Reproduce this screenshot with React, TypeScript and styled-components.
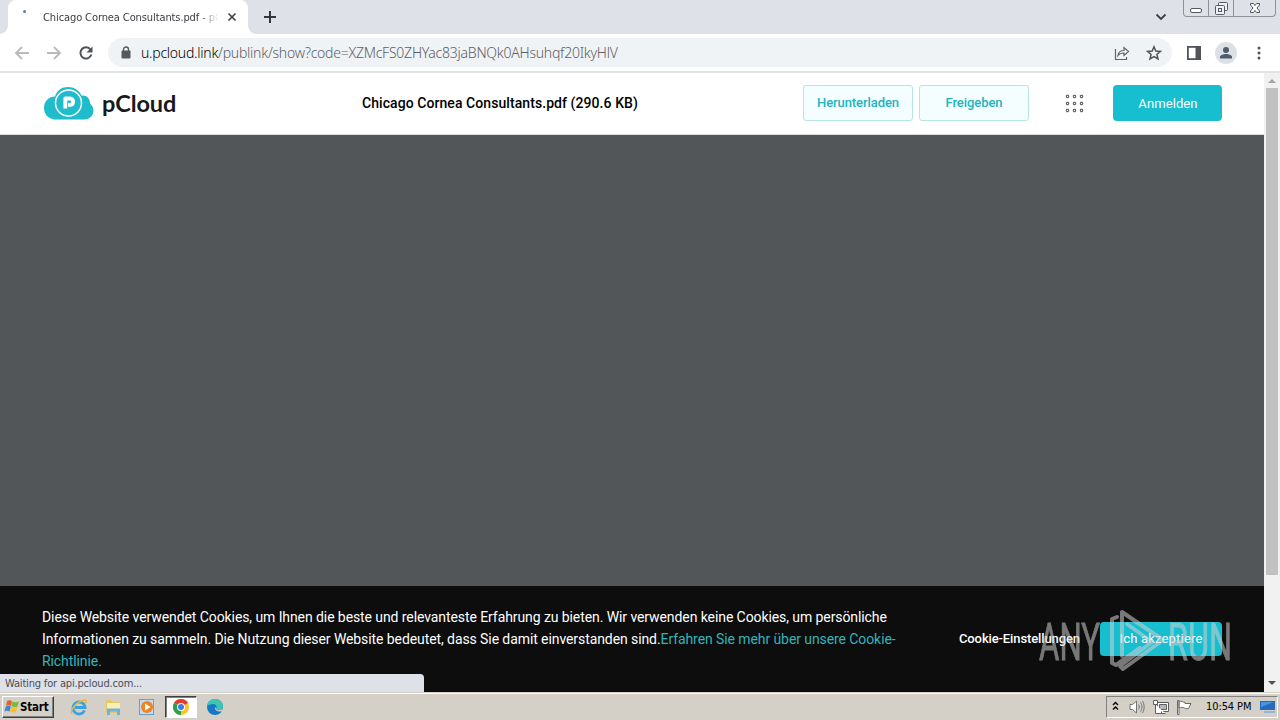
import React from "react";
import styled, { createGlobalStyle } from "styled-components";

const Global = createGlobalStyle`
  * { box-sizing: border-box; }
  html, body { margin: 0; padding: 0; overflow: hidden; }
  svg { display: block; flex: none; }
  button { margin: 0; padding: 0; border: 0; background: none; font: inherit; color: inherit; }
`;

const uiFont = `"DejaVu Sans Condensed", "DejaVu Sans", sans-serif`;

const Screen = styled.div`
  position: relative;
  width: 1280px;
  height: 720px;
  display: flex;
  flex-direction: column;
  overflow: hidden;
  background: #fff;
  font-family: Roboto, sans-serif;
  white-space: nowrap;
`;

/* Browser chrome */
const TabStrip = styled.div`
  height: 34px;
  flex: none;
  display: flex;
  background: #dee1e8;
  padding-left: 8px;
`;
const Tab = styled.div`
  position: relative;
  width: 240px;
  height: 34px;
  display: flex;
  align-items: center;
  padding: 0 10px 0 10px;
  background: #fff;
  border-radius: 8px 8px 0 0;
  &::before, &::after {
    content: "";
    position: absolute;
    bottom: 0;
    width: 8px;
    height: 8px;
  }
  &::before { left: -8px; background: radial-gradient(circle at 0 0, #dee1e8 7.5px, #fff 8px); }
  &::after { right: -8px; background: radial-gradient(circle at 100% 0, #dee1e8 7.5px, #fff 8px); }
`;
const Spinner = styled.span`
  width: 3px;
  height: 3px;
  margin: 0 17px 11px 5px;
  border-radius: 2px;
  background: #4a7fd0;
`;
const TabTitle = styled.span`
  width: 176px;
  padding-top: 2px;
  overflow: hidden;
  font: 11px/16px ${uiFont};
  letter-spacing: -0.1px;
  color: #3a3d41;
  mask-image: linear-gradient(to right, #000 155px, transparent 176px);
`;
const TabClose = styled.button`
  margin-left: 8px;
`;
const NewTab = styled.button`
  margin-left: 15px;
`;
const TabSearch = styled.button`
  margin-left: auto;
  margin-right: 16px;
`;
const WindowControls = styled.div`
  display: flex;
  width: 93px;
  height: 17px;
  margin-right: 4px;
  border: 1px solid #8e929b;
  border-top: 0;
  border-radius: 0 0 4px 4px;
`;
const WindowButton = styled.button<{ $w: number }>`
  width: ${(p) => p.$w}px;
  height: 16px;
  display: flex;
  justify-content: center;
  & + & { border-left: 1px solid #8e929b; }
`;
const Toolbar = styled.div`
  height: 39px;
  flex: none;
  display: flex;
  align-items: center;
  padding: 0 19px 0 14px;
  border-bottom: 2px solid #e1e2e4;
`;
const NavButton = styled.button`
  width: 16px;
  height: 16px;
  margin-right: 16px;
`;
const AddressBar = styled.div`
  width: 1064px;
  height: 29px;
  flex: none;
  display: flex;
  align-items: center;
  margin-left: -2px;
  padding: 0 10px 0 13px;
  border-radius: 15px;
  background: #f0f3f5;
`;
const Url = styled.span`
  margin: 1px auto 0 10px;
  font: 300 14px/20px "Noto Sans", sans-serif;
  letter-spacing: -0.245px;
  color: #5c6064;
  b { font-weight: 300; color: #000; }
`;
const BarIcon = styled.button`
  margin-left: 16px;
`;
const PanelIcon = styled.button`
  margin-left: 15px;
`;
const Avatar = styled.span`
  width: 22px;
  height: 22px;
  margin: 0 20px 0 14px;
  border-radius: 50%;
  background: #dde1e6;
`;

/* Page */
const Viewport = styled.div`
  position: relative;
  height: 619px;
  flex: none;
  display: flex;
`;
const Page = styled.div`
  width: 1264px;
  display: flex;
  flex-direction: column;
`;
const Header = styled.header`
  height: 62px;
  flex: none;
  display: flex;
  align-items: center;
  padding: 0 42px 1px 43px;
  border-bottom: 1px solid #d9dadb;
`;
const Brand = styled.span`
  width: 260px;
  margin: 0 0 0 8px;
  font: 700 23.5px/30px Lato, sans-serif;
  letter-spacing: -0.1px;
  color: #17191b;
`;
const FileName = styled.span`
  width: 441px;
  font-weight: 500;
  font-size: 14px;
  letter-spacing: 0.07px;
  color: #000;
`;
const OutlineButton = styled.button`
  width: 110px;
  height: 36px;
  margin-right: 6px;
  padding-bottom: 1px;
  border: 1px solid #b9e4e6;
  border-radius: 3px;
  background: #f4fdff;
  color: #20b5bd;
  font-size: 13px;
  font-weight: 500;
  letter-spacing: -0.08px;
`;
const AppsButton = styled.button`
  margin: 0 29px 0 30px;
`;
const PrimaryButton = styled.button<{ $w: number; $h: number }>`
  width: ${(p) => p.$w}px;
  height: ${(p) => p.$h}px;
  padding-left: 1px;
  border-radius: 4px;
  background: #17bed0;
  color: #fff;
  font-size: 13px;
  letter-spacing: 0.1px;
`;
const Preview = styled.main`
  flex: 1;
  background: #525659;
`;
const CookieBar = styled.footer`
  height: 106px;
  flex: none;
  display: flex;
  padding: 20px 42px 0 42px;
  background: #0d0d0d;
  color: #fff;
`;
const CookieText = styled.p`
  width: 917px;
  margin: 0;
  font-size: 14px;
  line-height: 22px;
  letter-spacing: -0.085px;
  a { color: #33b4bb; }
`;
const CookieSettings = styled.button`
  width: 121px;
  height: 34px;
  margin: 15px 20px 0 0;
  text-align: left;
  font-size: 13px;
  font-weight: 500;
  letter-spacing: -0.12px;
`;
const AcceptButton = styled(PrimaryButton)`
  margin-top: 16px;
  padding: 0 0 2px;
  letter-spacing: 0.2px;
`;
const ScrollBar = styled.div`
  width: 16px;
  display: flex;
  flex-direction: column;
  align-items: center;
  background: #f1f1f1;
`;
const ScrollArrow = styled.span<{ $down?: boolean }>`
  width: 0;
  height: 0;
  margin: ${(p) => (p.$down ? "auto 0 7px" : "6px 0 5px")};
  border: 4px solid transparent;
  ${(p) =>
    p.$down
      ? "border-bottom-width: 0; border-top-color: #505050;"
      : "border-top-width: 0; border-bottom-color: #a3a3a3;"}
`;
const ScrollThumb = styled.span`
  width: 12px;
  height: 487px;
  background: #c1c1c1;
`;
const StatusBubble = styled.div`
  position: absolute;
  left: 0;
  bottom: 0;
  width: 424px;
  height: 18px;
  padding: 1px 0 0 5px;
  border-radius: 0 4px 0 0;
  background: #dee1e8;
  color: #4a4d52;
  font: 11px/18px ${uiFont};
  letter-spacing: -0.17px;
`;
const Watermark = styled.svg`
  position: absolute;
  left: 1034px;
  top: 532px;
`;

/* Taskbar */
const Taskbar = styled.div`
  height: 28px;
  flex: none;
  display: flex;
  align-items: center;
  padding: 1px 2px 1px 2px;
  border-top: 1px solid #d4d0c8;
  box-shadow: inset 0 1px #fff;
  background: #d4d0c8;
  color: #000;
`;
const StartButton = styled.button`
  display: flex;
  align-items: center;
  width: 52px;
  height: 22px;
  margin-right: 9px;
  padding-left: 1px;
  border: 1px solid;
  border-color: #fff #404040 #404040 #fff;
  box-shadow: inset -1px -1px #808080;
  font: bold 11.5px/18px ${uiFont};
  letter-spacing: -0.2px;
`;
const TaskItem = styled.button<{ $active?: boolean }>`
  display: flex;
  align-items: center;
  justify-content: center;
  width: 32px;
  height: 22px;
  margin-right: 2px;
  border: 1px solid;
  border-color: ${(p) => (p.$active ? "#404040 #fff #fff #404040" : "transparent")};
  box-shadow: ${(p) => (p.$active ? "inset 1px 1px #808080" : "none")};
  background: ${(p) => (p.$active ? "#fff" : "transparent")};
`;
const Tray = styled.div`
  display: flex;
  align-items: center;
  width: 172px;
  height: 22px;
  margin-left: auto;
  padding-left: 5px;
  border: 1px solid;
  border-color: #808080 #fff #fff #808080;
`;
const TrayIcon = styled.span<{ $gap: number }>`
  margin-right: ${(p) => p.$gap}px;
`;
const Clock = styled.span`
  width: 54px;
  font: 11px/16px ${uiFont};
  letter-spacing: -0.1px;
`;

const Arrow = ({ flip }: { flip?: boolean }) => (
  <svg width="16" height="16" viewBox="0 0 16 16" fill="none" stroke="#b8babd" strokeWidth="1.8">
    <path d={flip ? "M1 8h13M8 2l6 6-6 6" : "M15 8H2M8 2L2 8l6 6"} />
  </svg>
);

const CloudLogo = () => (
  <svg width="51" height="34" viewBox="0 0 51 34">
    <path
      d="M11 33.5A11 11 0 0 1 1 22C1 15 6 10.500 12 10.500C14 4 19 1 25 1S36 4 38.500 9.500C44 9 47 12.500 47 17.500C53 22 51 33 42 33.500Z"
      fill="#1fbccb"
    />
    <circle cx="25.500" cy="17" r="13" fill="#1fbccb" stroke="#fff" strokeWidth="1.5" />
    <path
      d="M22.300 22.500V12.500H27.500A3.200 3.200 0 0 1 27.500 18.800H25"
      fill="none"
      stroke="#fff"
      strokeWidth="3.800"
      strokeLinejoin="round"
    />
  </svg>
);

const AppsGrid = () => (
  <svg width="19" height="19" viewBox="0 0 19 19" fill="none" stroke="#6b6b6b" strokeWidth="1.2">
    {[2.5, 9.5, 16.5].map((y) =>
      [2.5, 9.5, 16.5].map((x) => (
        <rect key={`${x}-${y}`} x={x - 1.1} y={y - 1.1} width="2.200" height="2.200" rx="0.500" />
      ))
    )}
  </svg>
);

export default function App() {
  return (
    <Screen>
      <Global />
      <TabStrip>
        <Tab>
          <Spinner />
          <TabTitle>Chicago Cornea Consultants.pdf - pCloud</TabTitle>
          <TabClose aria-label="Close tab">
            <svg width="10" height="10" viewBox="0 0 10 10" stroke="#3c4043" strokeWidth="1.6">
              <path d="M1.500 1.500l7 7M8.500 1.500l-7 7" />
            </svg>
          </TabClose>
        </Tab>
        <NewTab aria-label="New tab">
          <svg width="14" height="14" viewBox="0 0 14 14" stroke="#33363a" strokeWidth="2">
            <path d="M7 1v12M1 7h12" />
          </svg>
        </NewTab>
        <TabSearch aria-label="Search tabs">
          <svg width="12" height="12" viewBox="0 0 12 12" fill="none" stroke="#3c4043" strokeWidth="1.8">
            <path d="M1.500 3.500L6 8l4.500-4.500" />
          </svg>
        </TabSearch>
        <WindowControls>
          <WindowButton $w={24} aria-label="Minimize">
            <svg width="14" height="16" viewBox="0 0 14 16">
              <rect x="1.500" y="8.500" width="11" height="4" rx="1.500" fill="#fff" stroke="#555961" />
            </svg>
          </WindowButton>
          <WindowButton $w={25} aria-label="Restore">
            <svg width="14" height="16" viewBox="0 0 14 16" fill="#eef0f4" stroke="#555961">
              <rect x="4.500" y="2.500" width="9" height="8" rx="1" />
              <rect x="1.500" y="5.500" width="9" height="9" rx="1" />
              <rect x="4.500" y="8.500" width="3" height="3" />
            </svg>
          </WindowButton>
          <WindowButton $w={42} aria-label="Close">
            <svg width="14" height="16" viewBox="0 0 14 16">
              <path
                d="M2.500 3.500h3L7 5.500l1.500-2h3v1.500L9 8l2.500 3v1.500h-3L7 10.500l-1.500 2h-3V11L5 8 2.500 5z"
                fill="#fff"
                stroke="#555961"
              />
            </svg>
          </WindowButton>
        </WindowControls>
      </TabStrip>
      <Toolbar>
        <NavButton aria-label="Back"><Arrow /></NavButton>
        <NavButton aria-label="Forward"><Arrow flip /></NavButton>
        <NavButton aria-label="Reload">
          <svg width="16" height="16" viewBox="0 0 16 16">
            <path d="M12.500 4.500A5.600 5.600 0 1 0 13.400 9.500" fill="none" stroke="#505458" strokeWidth="2" />
            <path d="M14.500 1.500v6H8.500z" fill="#505458" />
          </svg>
        </NavButton>
        <AddressBar>
          <svg width="10" height="13" viewBox="0 0 10 13">
            <rect x="0.500" y="4.500" width="9" height="8" rx="1" fill="#55595d" />
            <path d="M2.500 5V3.500a2.500 2.500 0 0 1 5 0V5" fill="none" stroke="#55595d" strokeWidth="1.400" />
          </svg>
          <Url><b>u.pcloud.link</b>/publink/show?code=XZMcFS0ZHYac83jaBNQk0AHsuhqf20IkyHlV</Url>
          <BarIcon aria-label="Share">
            <svg width="16" height="16" viewBox="0 0 16 16" fill="none" stroke="#5f6368" strokeWidth="1.200">
              <path d="M1.500 4v10.500H12.500V12" />
              <path d="M4 10.500c.5-3.800 3-5 6-5V2.500L14.500 6.500l-4.500 4V8C7.500 8 5.500 8.500 4 10.500z" />
            </svg>
          </BarIcon>
          <BarIcon aria-label="Bookmark">
            <svg width="16" height="16" viewBox="0 0 16 16" fill="none" stroke="#505458" strokeWidth="1.500">
              <path d="M8 1.800l1.800 4.200 4.600.4-3.500 3 1.100 4.500L8 11.500l-4 2.400 1.100-4.500-3.500-3L6.200 6z" />
            </svg>
          </BarIcon>
        </AddressBar>
        <PanelIcon aria-label="Side panel">
          <svg width="14" height="14" viewBox="0 0 14 14">
            <rect x="0.900" y="0.900" width="12.200" height="12.200" fill="#fff" stroke="#505458" strokeWidth="1.800" />
            <path d="M8.500 0H14v14H8.500z" fill="#505458" />
          </svg>
        </PanelIcon>
        <Avatar>
          <svg width="22" height="22" viewBox="0 0 22 22" fill="#505b70">
            <circle cx="11" cy="8" r="3" />
            <path d="M5 16.500v-1.500c0-2 3.500-3 6-3s6 1 6 3v1.500z" />
          </svg>
        </Avatar>
        <svg width="4" height="14" viewBox="0 0 4 14" fill="#505458">
          <circle cx="2" cy="2" r="1.500" />
          <circle cx="2" cy="7" r="1.500" />
          <circle cx="2" cy="12" r="1.500" />
        </svg>
      </Toolbar>

      <Viewport>
        <Page>
          <Header>
            <CloudLogo />
            <Brand>pCloud</Brand>
            <FileName>Chicago Cornea Consultants.pdf (290.6 KB)</FileName>
            <OutlineButton>Herunterladen</OutlineButton>
            <OutlineButton>Freigeben</OutlineButton>
            <AppsButton aria-label="Apps"><AppsGrid /></AppsButton>
            <PrimaryButton $w={109} $h={36}>Anmelden</PrimaryButton>
          </Header>
          <Preview />
          <CookieBar>
            <CookieText>
              Diese Website verwendet Cookies, um Ihnen die beste und relevanteste Erfahrung zu bieten. Wir verwenden keine Cookies, um persönliche<br />
              Informationen zu sammeln. Die Nutzung dieser Website bedeutet, dass Sie damit einverstanden sind.<a>Erfahren Sie mehr über unsere Cookie-<br />Richtlinie.</a>
            </CookieText>
            <CookieSettings>Cookie-Einstellungen</CookieSettings>
            <AcceptButton $w={122} $h={34}>Ich akzeptiere</AcceptButton>
          </CookieBar>
        </Page>
        <ScrollBar>
          <ScrollArrow />
          <ScrollThumb />
          <ScrollArrow $down />
        </ScrollBar>
        <StatusBubble>Waiting for api.pcloud.com...</StatusBubble>
        <Watermark width="202" height="72" viewBox="0 0 202 72" opacity="0.55">
          <g fill="#d0d0d0" stroke="#d0d0d0" strokeWidth="0.8" fontFamily="Roboto" fontSize="52">
            <text x="5" y="55" textLength="61" lengthAdjust="spacingAndGlyphs">ANY</text>
            <text x="134" y="55" textLength="64" lengthAdjust="spacingAndGlyphs">RUN</text>
          </g>
          <g fill="none" stroke="#d0d0d0" strokeWidth="4" strokeLinejoin="round" strokeLinecap="round">
            <path d="M83 12L78 14V58L82 60 106 43" />
            <path d="M88 51V7L129 35 89 64 86 61 118 37 93 19" />
          </g>
        </Watermark>
      </Viewport>

      <Taskbar>
        <StartButton>
          <svg width="16" height="15" viewBox="0 0 16 15">
            <path d="M3 2c2-1 4-1 5 .5L7 7C5.500 6 3.500 6 2 7z" fill="#e8602c" />
            <path d="M8.500 2.500c2 1 4 1 6.500 0l-1.500 5c-2 1-4 .5-6-.3z" fill="#7cb83e" />
            <path d="M1.800 7.500c2-1 3.500-1 5 0l-1.300 5c-1.500-1-3-1-5 0z" fill="#3f86cf" />
            <path d="M7.300 7.800c2 1 4 1 6 .2L12 13c-2 1-4 .6-6-.3z" fill="#f5c030" />
          </svg>
          Start
        </StartButton>
        <TaskItem aria-label="Internet Explorer">
          <svg width="18" height="18" viewBox="0 0 18 18" fill="none">
            <path d="M14.500 12.500A6 6 0 1 1 15 9.500H5" stroke="#3ba3df" strokeWidth="2.800" />
            <path d="M2 15.500C-1 14 6 3 15 2c2 0 1.500 2 .5 3.500" stroke="#e5b83c" strokeWidth="1.400" />
          </svg>
        </TaskItem>
        <TaskItem aria-label="Explorer">
          <svg width="18" height="18" viewBox="0 0 18 18">
            <path d="M2 2h5l1 2h8v11H2z" fill="#e3c768" />
            <path d="M3 5h13v6H3z" fill="#faeeb0" />
            <path d="M3 17v-6.500h13V17h-3v-3.500H6V17z" fill="#69b5dc" />
          </svg>
        </TaskItem>
        <TaskItem aria-label="Media Player">
          <svg width="18" height="18" viewBox="0 0 18 18">
            <rect x="1.500" y="1.500" width="14" height="15" fill="#c5ddf2" stroke="#6c9dca" />
            <circle cx="9" cy="9" r="6" fill="#ef8420" />
            <path d="M7 5.500v7L12.500 9z" fill="#fff" />
          </svg>
        </TaskItem>
        <TaskItem $active aria-label="Chrome">
          <svg width="16" height="16" viewBox="0 0 16 16">
            <circle cx="8" cy="8" r="8" fill="#f9c623" />
            <path d="M8 8L1.070 4A8 8 0 0 1 14.930 4z" fill="#e33b2e" />
            <path d="M8 8L8 16A8 8 0 0 1 1.070 4z" fill="#2da04d" />
            <circle cx="8" cy="8" r="4" fill="#fff" />
            <circle cx="8" cy="8" r="3" fill="#3b7de0" />
          </svg>
        </TaskItem>
        <TaskItem aria-label="Edge">
          <svg width="18" height="18" viewBox="0 0 18 18">
            <circle cx="9" cy="9" r="8" fill="#1878c8" />
            <path d="M1.200 8C2 3 5.500 1 9 1c5 0 8 3.500 8 7 0 3-2.500 4-5 4-1.500 0-2-1-1.500-2 .8-2-1-4-3.500-4-2.500 0-5 1-5.800 2z" fill="#3cc7b4" />
            <path d="M10.500 10c-.5 1 .1 2.200 2 2.200 1.800 0 3.300-.5 4.200-1.600V13c-3 1-8 .5-7.700-3.500z" fill="#d4d0c8" />
          </svg>
        </TaskItem>
        <Tray>
          <TrayIcon $gap={10}>
            <svg width="7" height="12" viewBox="0 0 7 12" fill="none" stroke="#000" strokeWidth="1.400">
              <path d="M1 4l2.500-2.500L6 4M1 8.500L3.500 6 6 8.500" />
            </svg>
          </TrayIcon>
          <TrayIcon $gap={8}>
            <svg width="16" height="16" viewBox="0 0 16 16" fill="none" stroke="#747474">
              <path d="M1 5.500h2.500L7.500 2v12L3.500 10.500H1z" fill="#fff" />
              <path d="M9.500 5.500c1 1.500 1 3.500 0 5M11.500 3.500c2 2.500 2 6.500 0 9M13.500 2c2.200 3.500 2.200 8.500 0 12" />
            </svg>
          </TrayIcon>
          <TrayIcon $gap={7}>
            <svg width="16" height="16" viewBox="0 0 16 16" fill="#fff" stroke="#5e5e5e">
              <path d="M4.500 3.500h11v9h-11z" />
              <path d="M6.500 5.500h7v5h-7z" fill="#b8b8b8" />
              <path d="M0.500 1.500h4v4h-4zM2.500 5.500v9h10M8.500 12.500v2" />
            </svg>
          </TrayIcon>
          <TrayIcon $gap={14}>
            <svg width="16" height="16" viewBox="0 0 16 16" fill="#fff" stroke="#6a6a6a">
              <path d="M1.500 1.500h1.500v14H1.500zM3 2.500c3-1 4 1 6 .8v1.200h6l-2.500 5c-2 .5-3 .3-4-.5-2-.8-3.500-.8-5.500 0z" />
            </svg>
          </TrayIcon>
          <Clock>10:54 PM</Clock>
          <svg width="16" height="15" viewBox="0 0 16 15">
            <path d="M0 2h15v9H0z" fill="#2669bd" />
            <path d="M1 3h13L1 8z" fill="#4b92dd" />
            <path d="M4 12h11v2H4z" fill="#93b5d8" />
          </svg>
        </Tray>
      </Taskbar>
    </Screen>
  );
}
